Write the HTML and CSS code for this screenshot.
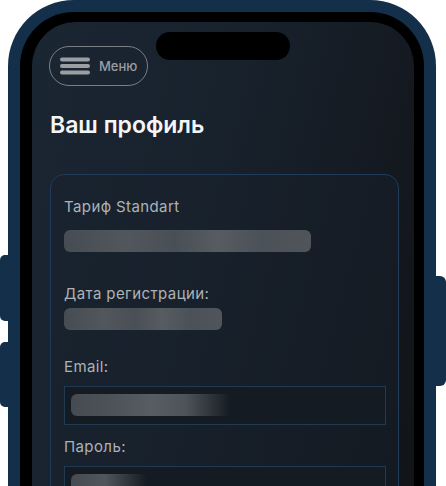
FILE: index.html
```html
<!DOCTYPE html>
<html lang="ru">
<head>
<meta charset="utf-8">
<title>Ваш профиль</title>
<link rel="stylesheet" href="styles.css">
</head>
<body>
<div class="device">
  <span class="side-btn side-left-1"></span>
  <span class="side-btn side-left-2"></span>
  <span class="side-btn side-right"></span>
  <div class="phone">
    <div class="bezel">
      <div class="screen">
        <div class="island"></div>
        <button class="menu-btn">
          <svg class="burger" width="30" height="18" viewBox="0 0 30 18">
            <line x1="2" y1="2.5" x2="28" y2="2.5"/>
            <line x1="2" y1="9" x2="28" y2="9"/>
            <line x1="2" y1="15.5" x2="28" y2="15.5"/>
          </svg>
          <span class="menu-text">Меню</span>
        </button>
        <h1 class="title">Ваш профиль</h1>
        <section class="card">
          <div class="label label-plan">Тариф Standart</div>
          <div class="blur-bar bar-plan"></div>
          <div class="label label-date">Дата регистрации:</div>
          <div class="blur-bar bar-date"></div>
          <div class="label label-email">Email:</div>
          <div class="field"><div class="blur-bar fade bar-email"></div></div>
          <div class="label label-pass">Пароль:</div>
          <div class="field"><div class="blur-bar fade bar-pass"></div></div>
        </section>
      </div>
    </div>
  </div>
</div>
</body>
</html>
```

FILE: styles.css
```css
* { box-sizing: border-box; }
html, body {
  margin: 0;
  padding: 0;
  background: #ffffff;
  overflow: hidden;
  height: 486px;
}
body {
  font-family: Inter, "Noto Sans", sans-serif;
}
.device {
  position: relative;
  width: 446px;
  height: 486px;
}
.side-btn {
  position: absolute;
  background: #142f49;
}
.side-left-1 {
  left: 0;
  top: 255px;
  width: 12px;
  height: 66px;
  border-radius: 5px 0 0 5px;
}
.side-left-2 {
  left: 0;
  top: 342px;
  width: 12px;
  height: 65px;
  border-radius: 5px 0 0 5px;
}
.side-right {
  right: 0;
  top: 276px;
  width: 14px;
  height: 110px;
  border-radius: 0 6px 6px 0;
}
.phone {
  margin-left: 8px;
  width: 428px;
  height: 520px;
  background: #142f49;
  border-radius: 66px 66px 0 0;
  padding: 12px 12px 0 12px;
}
.bezel {
  height: 100%;
  background: #000;
  border-radius: 54px 54px 0 0;
  padding: 10px 10px 0 12px;
}
.screen {
  position: relative;
  height: 100%;
  border-radius: 44px 44px 0 0;
  background: linear-gradient(105deg, #1b2633 0%, #18222d 40%, #151b23 70%, #111317 100%);
  padding: 24px 14px 0 18px;
  overflow: hidden;
}
.island {
  position: absolute;
  left: 124px;
  top: 10px;
  width: 134px;
  height: 28px;
  border-radius: 14px;
  background: #000;
}
.menu-btn {
  display: flex;
  align-items: center;
  gap: 9px;
  width: 99px;
  height: 40px;
  margin-left: -1px;
  padding: 0 0 0 10px;
  border: 1.5px solid #7a7f85;
  border-radius: 20px;
  background: transparent;
  font-family: inherit;
  cursor: pointer;
}
.burger {
  display: block;
  stroke: #9b9ea2;
  stroke-width: 4;
  stroke-linecap: round;
}
.menu-text {
  color: #9a9ea3;
  font-size: 13px;
  font-weight: 500;
  letter-spacing: 0;
}
.title {
  margin: 26px 0 0 0;
  color: #f4f5f6;
  font-size: 23px;
  line-height: 26px;
  font-weight: 600;
  letter-spacing: 0;
}
.card {
  margin-top: 36px;
  margin-right: 1px;
  border: 1px solid #1f3c58;
  border-radius: 14px;
  background: rgba(24, 33, 44, 0.45);
  padding: 23px 13px 40px 13px;
}
.label {
  color: #aeb2b7;
  font-size: 15px;
  line-height: 18px;
  font-weight: 400;
  letter-spacing: 0.4px;
}
.blur-bar {
  height: 22px;
  border-radius: 6px;
  background: linear-gradient(90deg, #464c53 0%, #52575d 25%, #494f56 45%, #575c62 62%, #4b5158 80%, #50555b 100%);
  filter: blur(0.6px);
}
.bar-plan { width: 247px; margin-top: 14px; }
.label-date { margin-top: 33px; }
.bar-date { width: 158px; margin-top: 5px; }
.label-email { margin-top: 28px; }
.field {
  margin-top: 10px;
  width: 322px;
  height: 39px;
  border: 1px solid #203a52;
  background: #151b22;
  padding: 7px 0 0 6px;
}
.label-pass { margin-top: 13px; }
.fade {
  border-radius: 6px;
}
.bar-email {
  width: 160px;
  background: linear-gradient(90deg, #464b52 0%, #4f545a 30%, #585d63 50%, #4e535a 72%, rgba(70, 75, 82, 0) 100%);
}
.bar-pass {
  width: 76px;
  background: linear-gradient(90deg, #464b52 0%, #51565c 45%, rgba(70, 75, 82, 0) 100%);
}
```
